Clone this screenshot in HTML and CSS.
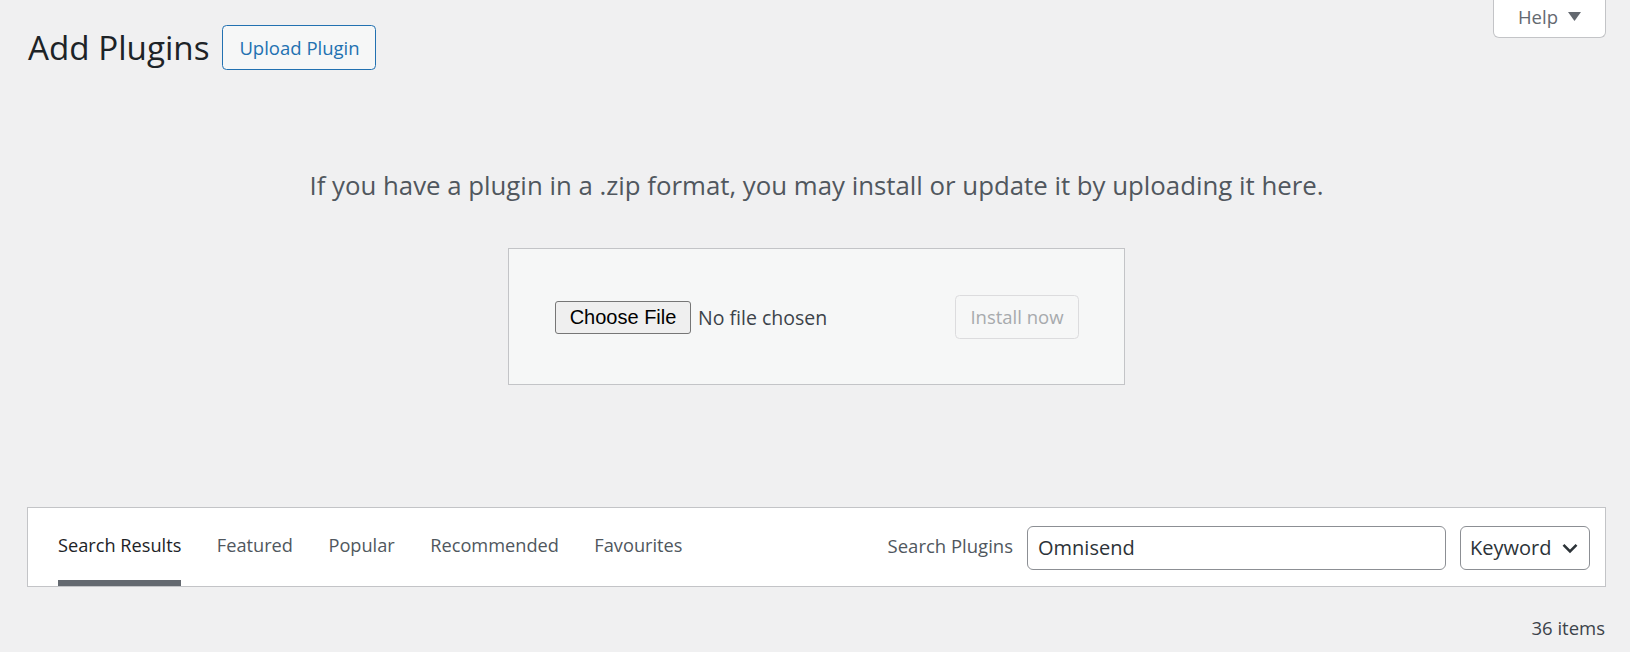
FILE: index.html
```html
<!DOCTYPE html>
<html lang="en">
<head>
<meta charset="utf-8">
<title>Add Plugins</title>
<link rel="stylesheet" href="styles.css">
</head>
<body>
<div class="wrap">
  <header class="head">
    <div class="title-row">
      <h1 class="page-title">Add Plugins</h1>
      <a class="btn-outline" href="#">Upload Plugin</a>
    </div>
    <button class="help-tab" type="button">Help <svg class="help-arrow" width="13" height="9" viewBox="0 0 13 9"><path d="M0 0 H13 L6.5 9 Z" fill="#646970"/></svg></button>
  </header>

  <section class="upload">
    <p class="install-help">If you have a plugin in a .zip format, you may install or update it by uploading it here.</p>
    <form class="upload-form">
      <div class="file-field">
        <button class="choose" type="button">Choose File</button>
        <span class="no-file">No file chosen</span>
      </div>
      <button class="install" type="button" disabled>Install now</button>
    </form>
  </section>

  <div class="filter">
    <ul class="filter-links">
      <li><a class="tab current" href="#">Search Results</a></li>
      <li><a class="tab" href="#">Featured</a></li>
      <li><a class="tab" href="#">Popular</a></li>
      <li><a class="tab" href="#">Recommended</a></li>
      <li><a class="tab" href="#">Favourites</a></li>
    </ul>
    <div class="search">
      <label class="search-label" for="s">Search Plugins</label>
      <input class="search-input" id="s" type="text" value="Omnisend">
      <div class="select">
        <span>Keyword</span>
        <svg class="chev" width="16" height="11" viewBox="0 0 16 11"><path d="M1.5 1.8 L8 8.3 L14.5 1.8" fill="none" stroke="#2c3338" stroke-width="2.6"/></svg>
      </div>
    </div>
  </div>

  <div class="count">36 items</div>
</div>
</body>
</html>
```

FILE: styles.css
```css
* { box-sizing: border-box; }
html, body { margin: 0; padding: 0; }
body {
  background: #f0f0f1;
  font-family: "Open Sans", "Noto Sans", "Liberation Sans", sans-serif;
  color: #3c434a;
  width: 1630px;
  height: 652px;
  overflow: hidden;
}
.wrap {
  padding: 0 24px 0 27px;
}
.head {
  display: flex;
  justify-content: space-between;
  align-items: flex-start;
}
.title-row {
  display: flex;
  align-items: center;
  gap: 13px;
  margin-top: 25px;
}
.page-title {
  margin: 0;
  font-size: 33.2px;
  font-weight: 400;
  color: #1d2327;
  line-height: 44px;
  padding-left: 1px;
}
.btn-outline {
  display: flex;
  align-items: center;
  justify-content: center;
  width: 154px;
  height: 45px;
  border: 1.5px solid #2271b1;
  border-radius: 4.5px;
  background: #f6f7f7;
  color: #2271b1;
  text-decoration: none;
  font-size: 18.5px;
}
.help-tab {
  display: flex;
  align-items: center;
  justify-content: center;
  gap: 10px;
  width: 113px;
  height: 39px;
  margin-top: -1px;
  background: #fff;
  border: 1.5px solid #c3c4c7;
  border-top: none;
  border-radius: 0 0 6px 6px;
  color: #646970;
  font-family: inherit;
  font-size: 18.5px;
  padding: 0 0 4px 0;
}
.help-arrow {
  display: block;
  margin-top: 1px;
}
.upload {
  text-align: center;
}
.install-help {
  margin: 95px 0 0 0;
  font-size: 25.8px;
  line-height: 40px;
  color: #50575e;
}
.upload-form {
  display: flex;
  justify-content: space-between;
  align-items: center;
  width: 617px;
  height: 137px;
  margin: 43px auto 0;
  padding: 0 45px 0 46px;
  background: #f6f7f7;
  border: 1.5px solid #c3c4c7;
  text-align: left;
}
.file-field {
  display: flex;
  align-items: center;
  gap: 7px;
  margin-top: 1px;
}
.choose {
  width: 136px;
  height: 33px;
  padding: 0;
  font-family: "Liberation Sans", Arial, sans-serif;
  font-size: 20px;
  color: #000;
  background: #efefef;
  border: 1.5px solid #767676;
  border-radius: 3px;
}
.no-file {
  font-size: 19.5px;
  color: #3c434a;
}
.install {
  width: 124px;
  height: 44px;
  padding: 0;
  font-family: inherit;
  font-size: 18.5px;
  color: #a7aaad;
  background: #f6f7f7;
  border: 1.5px solid #dcdcde;
  border-radius: 4.5px;
}
.filter {
  display: flex;
  justify-content: space-between;
  align-items: stretch;
  height: 80px;
  margin-top: 122px;
  background: #fff;
  border: 1.5px solid #c3c4c7;
  padding: 0 15px 0 30px;
}
.filter-links {
  display: flex;
  gap: 35.5px;
  list-style: none;
  margin: 0;
  padding: 0;
}
.filter-links li { display: flex; }
.tab {
  display: block;
  padding-top: 22px;
  line-height: 30px;
  font-size: 18.2px;
  color: #50575e;
  text-decoration: none;
}
.tab.current {
  color: #1d2327;
  box-shadow: inset 0 -6px #646970;
}
.search {
  display: flex;
  align-items: center;
  padding-top: 2px;
}
.search-label {
  font-size: 18.5px;
  color: #50575e;
  margin-right: 14px;
  margin-top: -5px;
}
.search-input {
  width: 419px;
  height: 44px;
  border: 1.5px solid #8c8f94;
  border-radius: 6px;
  padding: 0 12px 2px 10px;
  font-family: inherit;
  font-size: 20px;
  color: #2c3338;
  background: #fff;
  outline: none;
}
.select {
  display: flex;
  align-items: center;
  justify-content: space-between;
  width: 130px;
  height: 44px;
  margin-left: 14px;
  padding: 0 11px 2px 9px;
  border: 1.5px solid #8c8f94;
  border-radius: 6px;
  font-size: 20px;
  color: #2c3338;
  background: #fff;
}
.chev { display: block; margin-top: 2px; }
.count {
  text-align: right;
  margin-top: 26px;
  padding-right: 1px;
  font-size: 18.5px;
  line-height: 30px;
  color: #3c434a;
}
```
